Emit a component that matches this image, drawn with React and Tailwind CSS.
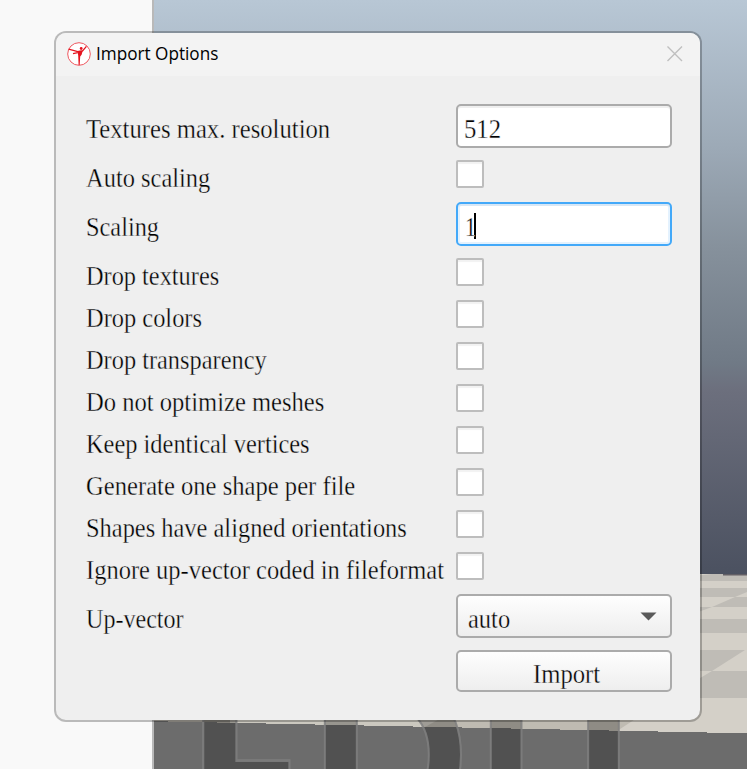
import React, { useLayoutEffect, useRef, useState } from "react";

const options = [
  { label: "Textures max. resolution", width: 244, kind: "input", value: "512", valueWidth: 37 },
  { label: "Auto scaling", width: 124, kind: "check" },
  { label: "Scaling", width: 73, kind: "focused", value: "1", valueWidth: 11 },
  { label: "Drop textures", width: 133, kind: "check" },
  { label: "Drop colors", width: 116, kind: "check" },
  { label: "Drop transparency", width: 181, kind: "check" },
  { label: "Do not optimize meshes", width: 238, kind: "check" },
  { label: "Keep identical vertices", width: 224, kind: "check" },
  { label: "Generate one shape per file", width: 269, kind: "check" },
  { label: "Shapes have aligned orientations", width: 321, kind: "check" },
  { label: "Ignore up-vector coded in fileformat", width: 358, kind: "check" },
  { label: "Up-vector", width: 98, kind: "select", value: "auto", valueWidth: 42 },
];

// Condenses a line of text horizontally to a given width.
function FitText({ width, className = "", children }) {
  const ref = useRef(null);
  const [scale, setScale] = useState(1);
  useLayoutEffect(() => {
    setScale(width / ref.current.offsetWidth);
  }, [width]);
  return (
    <span className={`block ${className}`} style={{ width }}>
      <span
        ref={ref}
        className="inline-block origin-left whitespace-nowrap"
        style={{ transform: `scaleX(${scale})` }}
      >
        {children}
      </span>
    </span>
  );
}

function Control({ kind, value, valueWidth }) {
  if (kind === "check") {
    return (
      <div className="size-7 self-start rounded-[2px] border-2 border-[#bdbdbd] bg-white shadow-[inset_0_2px_1px_#f2f2f2]" />
    );
  }
  if (kind === "select") {
    return (
      <div className="flex h-11 w-[216px] items-center justify-between rounded-[5px] border-2 border-[#ababab] bg-linear-to-b from-[#fefefe] to-[#eeeeee] pr-[13px] pl-[10px]">
        <FitText width={valueWidth} className="pt-1.5">{value}</FitText>
        <svg width="17" height="9" viewBox="0 0 17 9">
          <path d="M0.5 0.5H16.5L8.5 8.5Z" fill="#5a5a5a" />
        </svg>
      </div>
    );
  }
  if (kind === "focused") {
    return (
      <div className="flex h-11 w-[216px] items-center rounded-[5px] border-2 border-[#43a9f9] bg-white pl-[7px] shadow-[inset_0_2px_0_#d8e7f5,inset_0_0_0_2px_#e4f2fe]">
        <FitText width={valueWidth} className="pt-1.5">{value}</FitText>
        <div className="mt-[3px] -ml-[2px] h-[26px] w-[2px] bg-black" />
      </div>
    );
  }
  return (
    <div className="flex h-11 w-[216px] items-center rounded-[5px] border-2 border-[#ababab] bg-white pl-[6px] shadow-[inset_0_2px_0_#efefef]">
      <FitText width={valueWidth} className="pt-1.5">{value}</FitText>
    </div>
  );
}

function Scene() {
  return (
    <svg className="block" width="593" height="769" viewBox="154 0 593 769">
      <defs>
        <linearGradient id="sky" x1="0" y1="0" x2="0" y2="1">
          <stop offset="0" stopColor="#b8c7d5" />
          <stop offset="0.26" stopColor="#9ca9b6" />
          <stop offset="0.43" stopColor="#86919c" />
          <stop offset="0.63" stopColor="#707a86" />
          <stop offset="0.68" stopColor="#6c6f7d" />
          <stop offset="1" stopColor="#4b5160" />
        </linearGradient>
      </defs>
      <rect x="154" width="593" height="575" fill="url(#sky)" />
      <rect x="154" y="574" width="593" height="160" fill="#d4d0c8" />
      <g fill="#bfbcb6">
        <path d="M690 576.5L712 574H747V581H690Z" />
        <path d="M690 588H747V592L735 597H690Z" />
        <path d="M735 597H747V607H712Z" />
        <path d="M690 607H712L690 615Z" />
        <path d="M690 619H747V633H690Z" />
        <path d="M690 650H745L712 671H690Z" />
        <path d="M712 671H747V698H690V684Z" />
      </g>
      <path d="M723 574H747V575.5H723Z" fill="#625f65" />
      <path d="M154 716H350L310 730H154Z" fill="#aaa69e" />
      <path d="M230 716H420V730H360L230 723Z" fill="#cbc8bf" />
      <path d="M425 727L445 716H640L614 733H425Z" fill="#bfbbb2" />
      <path
        d="M154 721H168V722H217V723H266V724H315V725H364V726H413V727H462V728H511V729H560V730H609V731H658V732H707V733H747V769H154Z"
        fill="#6c6c6c"
      />
      <g
        fill="#000000"
        fillOpacity="0.25"
        stroke="#808080"
        strokeOpacity="0.85"
        strokeWidth="2"
        fontFamily="Liberation Sans, Arial, sans-serif"
        fontWeight="700"
      >
        <text transform="translate(183.5 876) scale(1.07 1.3)" fontSize="205" fontFamily="Open Sans, sans-serif">E</text>
        <text x="310" y="833" fontSize="222">D</text>
        <text x="478" y="845" fontSize="213">U</text>
      </g>
    </svg>
  );
}

function AppIcon() {
  return (
    <svg width="24" height="24" viewBox="0 0 24 24" fill="none">
      <circle cx="12" cy="12" r="11.3" fill="white" stroke="#ee5860" strokeWidth="1" />
      <circle cx="14.2" cy="6.5" r="1.4" fill="#e5141f" />
      <path
        d="M1.6 7.2L10.8 9.6L15.6 9L19.4 4.4M6 11.6L10.8 10.6"
        stroke="#e5141f"
        strokeWidth="1.3"
      />
      <path d="M10.5 9L15.8 8.6L14.6 12.8L13.2 14.6L12.7 23H11.6L11.2 13.4Z" fill="#e5141f" />
    </svg>
  );
}

export default function App() {
  return (
    <div className="relative h-[769px] w-[747px] overflow-hidden bg-[#f9f9f9]">
      <div className="ml-[152px] h-full border-l-2 border-[#b9b9b9]">
        <Scene />
      </div>
      <div className="absolute top-[31px] left-[54px] h-[691px] w-[648px] overflow-hidden rounded-[12px] border-2 border-black/25 bg-[#efefef] bg-clip-padding">
        <div className="flex h-[43px] items-center bg-[#f3f3f3] pr-[16px] pb-[2px] pl-[11px]">
          <AppIcon />
          <FitText width={122} className="ml-[5px] font-['Open_Sans',sans-serif] text-[18px] text-black">
            Import Options
          </FitText>
          <svg className="ml-auto" width="18" height="18" viewBox="0 0 18 18">
            <path d="M1.5 1.5L16 16M16 1.5L1.5 16" stroke="#bfbfbf" strokeWidth="1.4" />
          </svg>
        </div>
        <div className="flex flex-col gap-3 pt-7 pr-7 pl-[30px] font-['Liberation_Serif',serif] text-[28px] leading-[30px] text-black [-webkit-text-stroke:0.35px_#efefef]">
          {options.map((o) => (
            <div
              key={o.label}
              className={`flex items-center justify-between ${o.kind === "check" ? "h-[30px]" : "h-11"}`}
            >
              <FitText width={o.width} className="pt-1.5">{o.label}</FitText>
              <div className="flex h-full w-[216px]">
                <Control {...o} />
              </div>
            </div>
          ))}
          <div className="flex h-[42px] w-[216px] items-center justify-center self-end rounded-[5px] border-2 border-[#ababab] bg-linear-to-b from-[#fefefe] to-[#eeeeee]">
            <FitText width={67} className="pt-1.5 pl-[2px]">Import</FitText>
          </div>
        </div>
      </div>
    </div>
  );
}
